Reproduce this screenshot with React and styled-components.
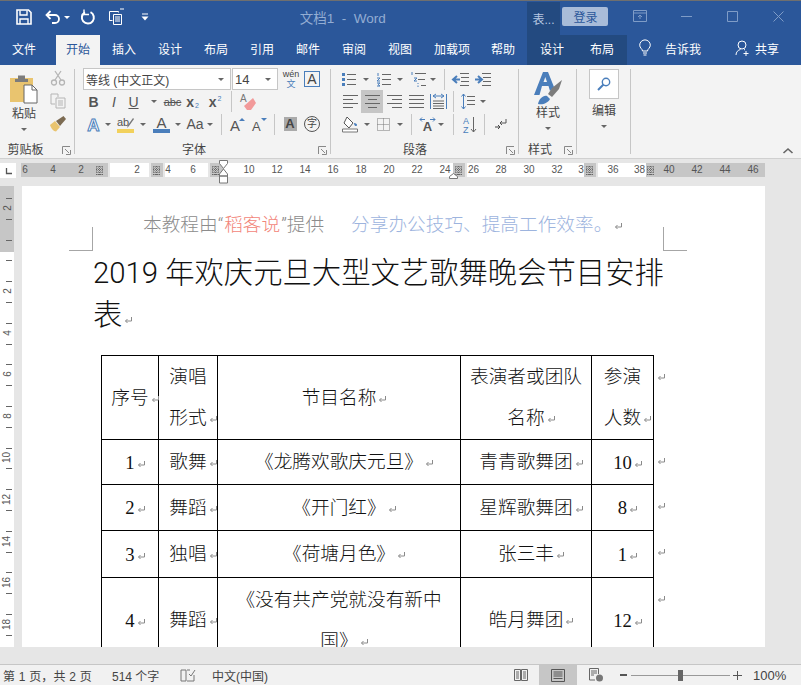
import React from 'react';
import styled, { createGlobalStyle } from 'styled-components';

const GlobalStyle = createGlobalStyle`
  html, body { margin: 0; padding: 0; background: #e6e6e6; }
  * { box-sizing: border-box; }
`;

const UI_FONT = '"Liberation Sans", "Noto Sans CJK SC", sans-serif';
const DOC_FONT = 'Roboto, "Noto Sans CJK SC", sans-serif';
const BLUE = '#2b579a';
const ICON_BLUE = '#4a7ebb';

const Window = styled.div`
  width: 801px;
  height: 685px;
  display: flex;
  flex-direction: column;
  overflow: hidden;
  font-family: ${UI_FONT};
  background: #e6e6e6;
`;

/* title bar */
const TitleBar = styled.div`
  height: 35px;
  flex: none;
  display: flex;
  align-items: stretch;
  background: ${BLUE};
  border-top: 1px solid #6f6f6f;
`;
const QuickTool = styled.span`
  width: ${p => p.$w}px;
  display: flex;
  align-items: center;
  justify-content: center;
  padding-bottom: 2px;
`;
const DocTitle = styled.div`
  flex: 0 0 ${p => p.$w}px;
  display: flex;
  align-items: center;
  justify-content: flex-end;
  padding: 0 1px 3px 0;
  color: #93add3;
  font-size: 13.5px;
  white-space: pre;
`;
const ContextTitle = styled.div`
  width: 34px;
  margin-top: 1px;
  background: #234a80;
  color: #b5c6e0;
  font-size: 12px;
  display: flex;
  align-items: center;
  justify-content: center;
`;
const LoginButton = styled.div`
  width: 46px;
  height: 19px;
  margin-top: 6px;
  border-radius: 2px;
  background: #a9bcd9;
  color: ${BLUE};
  font-size: 12px;
  display: flex;
  align-items: center;
  justify-content: center;
`;
const WinButton = styled.span`
  width: 46px;
  display: flex;
  align-items: center;
  justify-content: center;
  padding-bottom: 4px;
`;

/* tabs */
const TabBar = styled.div`
  height: 30px;
  flex: none;
  display: flex;
  align-items: stretch;
  background: ${BLUE};
  padding-left: 1px;
`;
const Tab = styled.div`
  width: ${p => p.$w}px;
  margin-left: ${p => p.$ml || 0}px;
  padding-bottom: 4px;
  display: flex;
  align-items: center;
  justify-content: center;
  gap: 3px;
  font-size: 12px;
  color: ${p => (p.$active ? BLUE : '#fff')};
  background: ${p => (p.$active ? '#f3f3f3' : p.$context ? '#234a80' : 'transparent')};
`;

/* ribbon */
const Ribbon = styled.div`
  height: 93px;
  flex: none;
  display: flex;
  background: #f3f3f3;
  position: relative;
`;
const Group = styled.div`
  width: ${p => p.$w}px;
  padding: 3px 0 0 ${p => p.$pl || 0}px;
  display: flex;
  flex-direction: column;
  position: relative;
  &::after {
    content: '';
    position: absolute;
    right: 0;
    top: 4px;
    bottom: 4px;
    width: 1px;
    background: #c6c6c6;
  }
`;
const GroupBody = styled.div`
  height: 68px;
  flex: none;
`;
const GroupLabel = styled.div`
  height: 22px;
  margin-left: ${p => p.$ml || 0}px;
  display: flex;
  align-items: center;
  justify-content: center;
  font-size: 12px;
  color: #444;
  padding-top: 2px;
`;
const Launcher = styled.span`
  position: absolute;
  right: 4px;
  bottom: 3px;
  display: flex;
`;
const ToolRow = styled.div`
  height: ${p => p.$h || 22}px;
  display: flex;
  align-items: center;
`;
const Tool = styled.span`
  flex: none;
  width: ${p => p.$w}px;
  height: 100%;
  display: flex;
  align-items: center;
  justify-content: center;
  color: #555;
  font-size: ${p => p.$size || 14}px;
  font-weight: ${p => (p.$bold ? 700 : 400)};
  font-style: ${p => (p.$italic ? 'italic' : 'normal')};
  background: ${p => (p.$active ? '#c6c6c6' : 'transparent')};
`;
const Script = styled.span`
  font-size: 7px;
  font-weight: 400;
  color: ${ICON_BLUE};
  align-self: ${p => (p.$up ? 'flex-start' : 'flex-end')};
  margin: ${p => (p.$up ? '5px 0 0 1px' : '0 0 4px 1px')};
`;
const CaretMark = styled.span`
  flex: none;
  width: 0;
  height: 0;
  border-left: 3px solid transparent;
  border-right: 3px solid transparent;
  border-top: 3px solid ${p => p.$color || '#666'};
`;
const Caret = ({ w }) => (
  <Tool $w={w}>
    <CaretMark />
  </Tool>
);
const Sep = styled.span`
  flex: none;
  width: 1px;
  height: 21px;
  background: #c6c6c6;
  margin: 0 ${p => p.$mr}px 0 ${p => p.$ml}px;
`;
const Combo = styled.div`
  flex: none;
  width: ${p => p.$w}px;
  height: 22px;
  margin-right: ${p => p.$mr || 0}px;
  background: #fff;
  border: 1px solid #c6c6c6;
  display: flex;
  align-items: center;
  justify-content: space-between;
  padding: 0 6px 0 2px;
  font-size: ${p => p.$size || 12}px;
  color: #444;
`;
const WenStack = styled.span`
  display: flex;
  flex-direction: column;
  align-items: center;
  font-size: 9px;
  line-height: 9px;
  color: #444;
`;
const WenChar = styled.span`
  font-size: 9px;
  line-height: 10px;
  color: ${ICON_BLUE};
`;
const SideRow = styled.div`
  display: flex;
  height: 100%;
`;
const PasteColumn = styled.div`
  width: 48px;
  padding-top: 5px;
  display: flex;
  flex-direction: column;
  align-items: center;
`;
const SideColumn = styled.div`
  width: 20px;
  display: flex;
  flex-direction: column;
  align-items: center;
  padding-top: 2px;
  gap: 7px;
`;
const BigColumn = styled.div`
  padding-top: 1px;
  display: flex;
  flex-direction: column;
  align-items: center;
`;
const StyleSlot = styled.span`
  display: flex;
  margin-top: 3px;
  height: 31px;
`;
const BigLabel = styled.div`
  font-size: 12px;
  line-height: 16px;
  height: 16px;
  margin: ${p => p.$mt || 0}px 0 6px;
  color: #444;
`;
const FindBox = styled.div`
  width: 30px;
  height: 30px;
  background: #fff;
  border: 1px solid #c6c6c6;
  display: flex;
  align-items: center;
  justify-content: center;
`;
const CollapseMark = styled.span`
  position: absolute;
  right: 8px;
  bottom: 4px;
  display: flex;
`;

/* horizontal ruler */
const RulerBar = styled.div`
  height: 20px;
  flex: none;
  display: flex;
  align-items: flex-end;
  background: #e6e6e6;
  border-top: 1px solid #d0d0d0;
  position: relative;
`;
const RulerCorner = styled.div`
  width: 16px;
  height: 15px;
  margin-right: 5px;
  background: #fff;
  display: flex;
  align-items: center;
  justify-content: center;
  padding-left: 2px;
`;
const RulerStrip = styled.div`
  display: flex;
  height: 14px;
  margin-bottom: 1px;
`;
const rulerTones = { dark: '#c6c6c6', light: '#fff', gap: 'transparent' };
const RulerCell = styled.span`
  flex: none;
  width: ${p => p.$w}px;
  background: ${p => rulerTones[p.$tone]};
  font-size: 10px;
  line-height: 14px;
  color: #555;
  text-align: center;
  overflow: hidden;
  display: flex;
  align-items: center;
  justify-content: center;
`;
const IndentMark = styled.svg`
  position: absolute;
  left: ${p => p.$x}px;
  top: ${p => p.$y}px;
`;

/* document */
const DocArea = styled.div`
  height: 469px;
  flex: none;
  display: flex;
  overflow: hidden;
  padding-top: 8px;
  background: #e6e6e6;
`;
const SideRuler = styled.div`
  width: 14px;
  margin-right: 8px;
  flex: none;
  padding-top: 12px;
  background: linear-gradient(#c6c6c6 0 66px, #fff 66px);
`;
const SideCell = styled.div`
  height: 20.8px;
  position: relative;
  display: flex;
  align-items: center;
  justify-content: center;
  font-size: 10px;
  color: #555;
  &::before {
    content: '';
    position: absolute;
    left: 6px;
    top: 0;
    width: 6px;
    height: 1px;
    background: #666;
  }
`;
const SideNumber = styled.span`
  display: block;
  transform: rotate(-90deg);
  padding-left: ${p => (p.$wide ? 0 : 1)}px;
`;
const Page = styled.div`
  width: 743px;
  flex: none;
  height: 700px;
  background: #fff;
  padding: 25px 0 0 71px;
  font-family: ${DOC_FONT};
  font-weight: 300;
  color: #111;
  position: relative;
`;
const CropMark = styled.span`
  position: absolute;
  top: 41px;
  width: 24px;
  height: 24px;
  border-bottom: 1px solid #a6a6a6;
  ${p => (p.$right ? 'left: 641px; border-left: 1px solid #a6a6a6;' : 'left: 47px; border-right: 1px solid #a6a6a6;')}
`;
const PageHeader = styled.div`
  height: 28px;
  margin: 0 0 13px 50px;
  font-size: 18.67px;
  line-height: 28px;
  color: #8c8c8c;
  white-space: nowrap;
`;
const Brand = styled.span`
  color: #f2857a;
  margin: 0 1px;
`;
const Slogan = styled.span`
  color: #9db4de;
  margin-left: 27px;
`;
const DocTitleText = styled.h1`
  margin: 0 0 19px;
  width: 580px;
  font-size: 29.33px;
  line-height: 42px;
  font-weight: 300;
  color: #111;
`;
const ScheduleTable = styled.table`
  border-collapse: collapse;
  table-layout: fixed;
  width: 577px;
  margin-left: 8px;
  font-size: 18.67px;
  line-height: 41px;
  font-weight: 300;
  color: #111;
`;
const Row = styled.tr`
  height: ${p => p.$h}px;
`;
const Cell = styled.td`
  border: 1px solid #000;
  padding: 1px ${p => p.$pad || 0}px 0;
  text-align: center;
  vertical-align: middle;
`;
const RowEnd = styled.td`
  border: none;
  padding: 0 0 0 1px;
  vertical-align: top;
`;
const Num = styled.span`
  font-family: "Liberation Serif", serif;
  font-weight: 400;
`;
const ReturnGlyph = styled.svg`
  margin-left: 2px;
  margin-right: ${p => (p.$hang ? -11 : 0)}px;
`;

/* status bar */
const StatusBar = styled.div`
  margin-top: 17px;
  height: 21px;
  flex: none;
  display: flex;
  align-items: center;
  background: #f1f1f1;
  border-top: 1px solid #c6c6c6;
  font-size: 12px;
  color: #444;
  padding-left: 3px;
`;
const StatusText = styled.span`
  width: ${p => p.$w}px;
  margin-left: ${p => p.$ml || 0}px;
  font-size: ${p => p.$size || 12}px;
  letter-spacing: ${p => p.$track || 0}px;
  white-space: nowrap;
`;
const StatusIcon = styled.span`
  flex: none;
  width: ${p => p.$w}px;
  height: 100%;
  display: flex;
  align-items: center;
  justify-content: center;
  background: ${p => (p.$active ? '#c6c6c6' : 'transparent')};
`;
const ZoomTrack = styled.div`
  flex: none;
  width: 99px;
  height: 1px;
  background: #999;
  display: flex;
  align-items: center;
  justify-content: center;
`;
const ZoomThumb = styled.span`
  width: 5px;
  height: 11px;
  background: #666;
`;

/* icons */
const Svg = ({ w = 16, h = 16, children, ...rest }) => (
  <svg width={w} height={h} viewBox={`0 0 ${w} ${h}`} fill="none" overflow="visible" {...rest}>
    {children}
  </svg>
);
const SaveIcon = () => (
  <Svg>
    <path d="M1 1h11.500L15 3.500V15H1z" stroke="#fff" strokeWidth="1.6" />
    <path d="M4 1.500V6h7V1.500M4 15v-5h8v5" stroke="#fff" strokeWidth="1.4" />
  </Svg>
);
const UndoIcon = () => (
  <Svg>
    <path d="M2 6h8a4 4 0 0 1 0 8H7" stroke="#fff" strokeWidth="1.8" />
    <path d="M5.500 2 1.500 6l4 4" stroke="#fff" strokeWidth="1.8" />
  </Svg>
);
const RedoIcon = () => (
  <Svg>
    <path d="M10.500 3.200a6 6 0 1 1-5.500.1" stroke="#fff" strokeWidth="2" />
    <path d="M4 .5v5h5" stroke="#fff" strokeWidth="1.4" />
  </Svg>
);
const TouchIcon = () => (
  <Svg w={18} h={18}>
    <path d="M1.500 3.500h9v1M1.500 3.500v9h3M12 1h4" stroke="#fff" strokeWidth="1" />
    <path d="M5.500 6.500h8v10h-8zM7 9h5M7 11h5M7 13h5" stroke="#fff" strokeWidth="1" />
  </Svg>
);
const CustomizeIcon = () => (
  <Svg w={8} h={8}>
    <path d="M1 1h6" stroke="#fff" />
    <path d="M.5 3.500h7L4 7.500z" fill="#fff" />
  </Svg>
);
const WinRibbonIcon = () => (
  <Svg w={14} h={12}>
    <path d="M.5.5h13v11H.5zM.5 3h13M7 9V5M5 7l2-2 2 2" stroke="#7f9cc7" />
  </Svg>
);
const WinMinIcon = () => (
  <Svg w={11} h={3}>
    <path d="M0 1.500h11" stroke="#7f9cc7" />
  </Svg>
);
const WinMaxIcon = () => (
  <Svg w={11} h={11}>
    <path d="M.5.5h10v10H.5z" stroke="#7f9cc7" />
  </Svg>
);
const WinCloseIcon = () => (
  <Svg w={11} h={11}>
    <path d="M.5.5l10 10M10.500.5l-10 10" stroke="#7f9cc7" />
  </Svg>
);
const BulbIcon = () => (
  <Svg w={12} h={17}>
    <path d="M3.500 11c0-2-2.800-3-2.800-5.800a5.300 5.300 0 0 1 10.600 0C11.300 8 8.500 9 8.500 11z" stroke="#fff" />
    <path d="M4 13h4M4.500 15h3" stroke="#fff" />
  </Svg>
);
const PersonIcon = () => (
  <Svg w={17} h={16}>
    <circle cx="7" cy="5" r="4" stroke="#fff" />
    <path d="M1 15c0-3 2-5 4.500-5.500M9 9.500l1 .4M11 11v5M8.500 13.500h5" stroke="#fff" />
  </Svg>
);
const PasteIcon = () => (
  <Svg w={30} h={31}>
    <path d="M1 5h23v24H1z" fill="#e9c46f" />
    <path d="M9 2.500h7V6h3v3H6V6h3z" fill="#7c7c7c" />
    <path d="M15 12h8l5 5v13H15z" fill="#fff" stroke="#666" />
    <path d="M23 12v5h5" stroke="#666" />
  </Svg>
);
const CutIcon = () => (
  <Svg>
    <path d="M5 1l6 9M11 1L5 10" stroke="#b5b5b5" strokeWidth="1.300" />
    <circle cx="4" cy="12.500" r="2.500" stroke="#b5b5b5" strokeWidth="1.300" />
    <circle cx="12" cy="12.500" r="2.500" stroke="#b5b5b5" strokeWidth="1.300" />
  </Svg>
);
const CopyIcon = () => (
  <Svg>
    <path d="M1 1h7v3M1 1v10h4M6 5h9v10H6zM8 8h5M8 10h5M8 12h5" stroke="#b5b5b5" />
  </Svg>
);
const PainterIcon = () => (
  <Svg>
    <path d="M0 9l5-4 5 6-4 4.500C3.500 15.500 1 12 0 9z" fill="#e9c46f" />
    <path d="M6 5l4 5 6-7-2.500-3z" fill="#7c6b52" />
  </Svg>
);
const LauncherIcon = () => (
  <Svg w={9} h={9}>
    <path d="M.5 8V.5H8M8.500 4v4.500H4M3 3l4 4" stroke="#888" />
  </Svg>
);
const EraserIcon = () => (
  <Svg w={16} h={18}>
    <path d="M7 17l-3-4 9-8 3 5-5 7z" fill="#f29a9a" />
    <text x="0" y="9" fontSize="10" fill="#777" fontFamily="Liberation Sans">A</text>
  </Svg>
);
const HighlightIcon = () => (
  <Svg w={17} h={17}>
    <text x="0" y="10" fontSize="11" fill="#555" fontFamily="Liberation Sans">ab</text>
    <path d="M10 12l1-3 5-7 1 1-5 7z" fill="#777" />
    <rect x="0" y="13" width="17" height="4" fill="#f2d15c" />
  </Svg>
);
const FontColorIcon = () => (
  <Svg w={17} h={17}>
    <text x="8.500" y="12" textAnchor="middle" fontSize="15" fill="#555" fontFamily="Liberation Sans">A</text>
    <rect x="0" y="13" width="17" height="4" fill={ICON_BLUE} />
  </Svg>
);
const OutlineA = () => (
  <Svg w={17} h={17}>
    <text x="8.500" y="15" textAnchor="middle" fontSize="17" fontWeight="700" fill="#fff" stroke={ICON_BLUE} strokeWidth="1" fontFamily="Liberation Sans">A</text>
  </Svg>
);
const GrowA = ({ down }) => (
  <Svg w={15} h={15}>
    <text x="0" y="14" fontSize={down ? 13 : 15} fill="#555" fontFamily="Liberation Sans">A</text>
    <path d={down ? 'M9 1h6l-3 3z' : 'M9 4h6l-3-3z'} fill={ICON_BLUE} />
  </Svg>
);
const ShadeA = styled.span`
  width: 13px;
  height: 14px;
  background: #aaa;
  color: #444;
  font-size: 13px;
  font-weight: 700;
  text-align: center;
  line-height: 14px;
`;
const RoundChar = styled.span`
  width: 16px;
  height: 16px;
  border: 1px solid #555;
  border-radius: 50%;
  color: #444;
  font-size: 10px;
  line-height: 14px;
  text-align: center;
`;
const BoxA = styled.span`
  width: 16px;
  height: 16px;
  border: 1px solid ${ICON_BLUE};
  color: #444;
  font-size: 14px;
  line-height: 15px;
  text-align: center;
`;
const ListIcon = ({ kind }) => (
  <Svg w={15} h={15}>
    <path d="M6 2.500h9M6 7.500h9M6 12.500h9" stroke="#666" />
    {kind === 'dots' ? (
      <path d="M1 1h3v3H1zM1 6h3v3H1zM1 11h3v3H1z" fill={ICON_BLUE} />
    ) : (
      <path d="M2 1v3M1 6h3l-3 3h3M1 11h3l-2 1.500 2 1.500H1" stroke={ICON_BLUE} />
    )}
  </Svg>
);
const MultiIcon = () => (
  <Svg w={17} h={15}>
    <path d="M5 1.500h11M8 7.500h7M11 13.500h5" stroke="#666" />
    <path d="M2 0v3M4 6h3l-3 3h3M8 11v1M8 13.500V15" stroke={ICON_BLUE} />
  </Svg>
);
const IndentIcon = ({ out }) => (
  <Svg w={17} h={13}>
    <path d="M8 .5h9M9 4.500h8M9 8.500h8M8 12.500h9" stroke="#666" />
    <path d={out ? 'M8 6.500H2M5 3 1 6.500 5 10' : 'M1 6.500h6M4 3l4 3.500L4 10'} stroke={ICON_BLUE} strokeWidth="2" />
  </Svg>
);
const alignPaths = {
  left: 'M0 1.500h15M0 5.500h10M0 9.500h15M0 13.500h10',
  center: 'M0 1.500h15M3 5.500h9M0 9.500h15M3 13.500h9',
  right: 'M0 1.500h15M5 5.500h10M0 9.500h15M5 13.500h10',
  justify: 'M0 1.500h15M0 5.500h15M0 9.500h15M0 13.500h15',
};
const AlignIcon = ({ kind }) => (
  <Svg w={15} h={15}>
    <path d={alignPaths[kind]} stroke="#666" />
  </Svg>
);
const DistributeIcon = () => (
  <Svg w={17} h={17}>
    <path d="M.5 1v15M16.500 1v15" stroke={ICON_BLUE} />
    <path d="M3 3h11M6 1 3 3l3 2M11 1l3 2-3 2" stroke={ICON_BLUE} />
    <path d="M3 8h11M3 10.500h11M3 13h11M3 15.500h11" stroke="#666" />
  </Svg>
);
const SpacingIcon = () => (
  <Svg w={14} h={17}>
    <path d="M6 3.500h8M6 7.500h8M6 11.500h8" stroke="#666" />
    <path d="M2.500 1v15M.5 3.500l2-2.500 2 2.500M.5 13.500l2 2.500 2-2.500" stroke={ICON_BLUE} />
  </Svg>
);
const ShadingIcon = () => (
  <Svg w={17} h={17}>
    <path d="M5 1l6 6-4 5-5-5z" stroke="#555" fill="#fff" />
    <path d="M12 7c2 0 3 1 3 2s-1 1-1.500 1-1.500-1-1.500-3z" fill={ICON_BLUE} />
    <path d="M.5 13h15v3H.5z" stroke="#777" fill="#fff" />
  </Svg>
);
const BordersIcon = () => (
  <Svg w={13} h={13}>
    <path d="M.5.5h12v12H.5zM.5 6.500h12M6.500.5v12" stroke="#777" strokeDasharray="1 1" />
  </Svg>
);
const AsianIcon = () => (
  <Svg w={17} h={15}>
    <text x="8.500" y="14" textAnchor="middle" fontSize="13" fontWeight="700" fill="#555" fontFamily="Liberation Sans">A</text>
    <path d="M1 2.500h5M3 .5l-2 2 2 2M16 2.500h-5M14 .5l2 2-2 2" stroke={ICON_BLUE} />
  </Svg>
);
const SortIcon = () => (
  <Svg w={14} h={17}>
    <text x="0" y="8" fontSize="9" fill={ICON_BLUE} fontFamily="Liberation Sans">A</text>
    <text x="0" y="17" fontSize="9" fill={ICON_BLUE} fontFamily="Liberation Sans">Z</text>
    <path d="M10.500 1v15M8 13l2.500 3 2.500-3" stroke="#666" />
  </Svg>
);
const MarksIcon = () => (
  <Svg w={13} h={13}>
    <path d="M12 1v4H6M8 3 6 5l2 2" stroke="#555" />
    <path d="M1 9h5M4 7l2 2-2 2" stroke="#444" />
  </Svg>
);
const StyleIcon = () => (
  <Svg w={28} h={32}>
    <path
      fillRule="evenodd"
      d="M0 23 9 0h5l6 15-4 4-1.500-5H8l-2.500 9zM9.500 10h3.500l-1.700-5z"
      fill={ICON_BLUE}
    />
    <path d="M4 32c1-5 5-9 9-8l3 3c-2 4-7 6-12 5z" fill={ICON_BLUE} />
    <path d="M14 22l4-6 10-8-3 9-7 8z" fill="#7c7c7c" />
  </Svg>
);
const SearchIcon = () => (
  <Svg w={14} h={14}>
    <circle cx="9" cy="5" r="3.700" stroke={ICON_BLUE} strokeWidth="1.400" />
    <path d="M6.500 7.500 1 13" stroke={ICON_BLUE} strokeWidth="2" />
  </Svg>
);
const CollapseIcon = () => (
  <Svg w={10} h={6}>
    <path d="M.5 5 5 1l4.500 4" stroke="#666" strokeWidth="1.600" />
  </Svg>
);
const TabStopIcon = () => (
  <Svg w={6} h={6}>
    <path d="M.5 0v5.500H6" stroke="#555" strokeWidth="1.300" />
  </Svg>
);
const RulerGrid = () => (
  <Svg w={8} h={9}>
    <path d="M0 1h8M0 3.500h8M0 6h8M0 8.500h8M1 0v9M3.500 0v9M6 0v9" stroke="#666" strokeDasharray="1 1" strokeWidth="1" />
  </Svg>
);
const ReturnMark = ({ hang }) => (
  <ReturnGlyph $hang={hang} width="9" height="9" viewBox="0 0 9 9" fill="none">
    <path d="M7.500 1v4H1.500M3.500 3 1.500 5l2 2" stroke="#8a8a8a" />
  </ReturnGlyph>
);
const ProofIcon = () => (
  <Svg w={16} h={13}>
    <path d="M1 1h5v11H1zM7 1h3M7 12h7V6" stroke="#777" />
    <path d="M9 5l2 2 4-6" stroke="#777" />
  </Svg>
);
const ReadIcon = () => (
  <Svg w={14} h={13}>
    <path d="M.5.5h6v11h-6zM7.500.5h6v11h-6zM2 3h3M2 5h3M2 7h3M2 9h3M9 3h3M9 5h3M9 7h3M9 9h3" stroke="#666" />
  </Svg>
);
const PrintIcon = () => (
  <Svg w={14} h={13}>
    <path d="M.5.5h13v12H.5zM2.500 3h9M2.500 5h9M2.500 7h9M2.500 9.500h9" stroke="#555" />
  </Svg>
);
const WebIcon = () => (
  <Svg w={15} h={14}>
    <path d="M6 12H.5V.5h9V6M2 3h6M2 5h6M2 7h3" stroke="#666" />
    <circle cx="10.500" cy="10" r="3.500" fill="#777" />
  </Svg>
);

/* ruler cells: labels stay on the scale, spacers fill what is between */
const run = (from, to, tone, marks = []) => {
  const cells = [];
  let pos = from;
  marks.forEach(([center, text]) => {
    const w = text === '#' ? 10 : text.length * 6 + 2;
    const left = Math.max(center - w / 2, pos);
    if (left > pos) cells.push({ w: left - pos, tone });
    const right = Math.min(center + w / 2, to);
    cells.push({ w: right - left, tone, text });
    pos = right;
  });
  if (to > pos) cells.push({ w: to - pos, tone });
  return cells;
};
const RULER = [
  ...run(21, 108, 'dark', [[25, '6'], [53, '4'], [81, '2'], [100, '#']]),
  ...run(108, 110, 'gap'),
  ...run(110, 149, 'light', [[137, '2']]),
  ...run(149, 151, 'gap'),
  ...run(151, 163, 'dark', [[157, '#']]),
  ...run(163, 165, 'gap'),
  ...run(165, 208, 'light', [[167, '4'], [193, '6']]),
  ...run(208, 210, 'gap'),
  ...run(210, 224, 'dark', [[216, '#']]),
  ...run(224, 453, 'light', [[249, '10'], [277, '12'], [305, '14'], [333, '16'], [361, '18'], [389, '20'], [417, '22'], [445, '24']]),
  ...run(453, 465, 'dark', [[459, '#']]),
  ...run(465, 467, 'gap'),
  ...run(467, 584, 'light', [[473, '26'], [501, '28'], [529, '30'], [557, '32'], [582, '3']]),
  ...run(584, 596, 'dark', [[590, '#']]),
  ...run(596, 598, 'gap'),
  ...run(598, 646, 'light', [[613, '36'], [640, '38']]),
  ...run(646, 765, 'dark', [[651, '#'], [669, '40'], [697, '42'], [725, '44'], [753, '46']]),
];
const SIDE_RULER = ['2', '', '', '', '2', '', '4', '', '6', '', '8', '', '10', '', '12', '', '14', '', '16', '', '18', ''];

const rows = [
  { h: 45, no: '1', style: '歌舞', name: '《龙腾欢歌庆元旦》', group: '青青歌舞团', count: '10' },
  { h: 46, no: '2', style: '舞蹈', name: '《开门红》', group: '星辉歌舞团', count: '8' },
  { h: 47, no: '3', style: '独唱', name: '《荷塘月色》', group: '张三丰', count: '1' },
  { h: 85, no: '4', style: '舞蹈', name: '《没有共产党就没有新中国》', group: '皓月舞团', count: '12' },
];

function App() {
  return (
    <Window>
      <GlobalStyle />
      <TitleBar>
        <QuickTool $w={16} />
        <QuickTool $w={16}><SaveIcon /></QuickTool>
        <QuickTool $w={13} />
        <QuickTool $w={16}><UndoIcon /></QuickTool>
        <QuickTool $w={12}><CaretMark $color="#fff" /></QuickTool>
        <QuickTool $w={7} />
        <QuickTool $w={16}><RedoIcon /></QuickTool>
        <QuickTool $w={12} />
        <QuickTool $w={18}><TouchIcon /></QuickTool>
        <QuickTool $w={15} />
        <QuickTool $w={8}><CustomizeIcon /></QuickTool>
        <DocTitle $w={238}>文档1  -  Word</DocTitle>
        <QuickTool $w={140} />
        <ContextTitle>表...</ContextTitle>
        <QuickTool $w={2} />
        <LoginButton>登录</LoginButton>
        <QuickTool $w={9} />
        <WinButton><WinRibbonIcon /></WinButton>
        <WinButton><WinMinIcon /></WinButton>
        <WinButton><WinMaxIcon /></WinButton>
        <WinButton><WinCloseIcon /></WinButton>
      </TitleBar>

      <TabBar>
        <Tab $w={46}>文件</Tab>
        <Tab $w={44} $ml={9} $active>开始</Tab>
        <Tab $w={46} $ml={1}>插入</Tab>
        <Tab $w={46}>设计</Tab>
        <Tab $w={46}>布局</Tab>
        <Tab $w={46}>引用</Tab>
        <Tab $w={46}>邮件</Tab>
        <Tab $w={46}>审阅</Tab>
        <Tab $w={46}>视图</Tab>
        <Tab $w={58}>加载项</Tab>
        <Tab $w={44}>帮助</Tab>
        <Tab $w={50} $ml={2} $context>设计</Tab>
        <Tab $w={50} $context>布局</Tab>
        <Tab $w={36}><BulbIcon /></Tab>
        <Tab $w={40}>告诉我</Tab>
        <Tab $w={31} />
        <Tab $w={46}><PersonIcon />共享</Tab>
      </TabBar>

      <Ribbon>
        <Group $w={75}>
          <GroupBody>
            <SideRow>
              <PasteColumn>
                <PasteIcon />
                <BigLabel $mt={2}>粘贴</BigLabel>
                <CaretMark />
              </PasteColumn>
              <SideColumn>
                <CutIcon />
                <CopyIcon />
                <PainterIcon />
              </SideColumn>
            </SideRow>
          </GroupBody>
          <GroupLabel $ml={-24}>剪贴板</GroupLabel>
          <Launcher><LauncherIcon /></Launcher>
        </Group>

        <Group $w={256} $pl={8}>
          <GroupBody>
            <ToolRow>
              <Combo $w={148} $mr={1}>等线 (中文正文)<CaretMark /></Combo>
              <Combo $w={46} $size={13}>14<CaretMark /></Combo>
              <Tool $w={26}>
                <WenStack>wén<WenChar>文</WenChar></WenStack>
              </Tool>
              <BoxA>A</BoxA>
            </ToolRow>
            <ToolRow $h={23}>
              <Tool $w={21} $bold>B</Tool>
              <Tool $w={20} $italic>I</Tool>
              <Tool $w={19}><u>U</u></Tool>
              <Caret w={21} />
              <Tool $w={17} $size={11}><s>abc</s></Tool>
              <Tool $w={23} $bold>x<Script>2</Script></Tool>
              <Tool $w={22} $bold>x<Script $up>2</Script></Tool>
              <Sep $ml={5} $mr={4} />
              <Tool $w={24}><EraserIcon /></Tool>
            </ToolRow>
            <ToolRow>
              <Tool $w={20}><OutlineA /></Tool>
              <Caret w={10} />
              <Tool $w={24}><HighlightIcon /></Tool>
              <Caret w={12} />
              <Tool $w={24}><FontColorIcon /></Tool>
              <Caret w={10} />
              <Tool $w={24}>Aa</Tool>
              <Caret w={6} />
              <Sep $ml={8} $mr={4} />
              <Tool $w={22}><GrowA /></Tool>
              <Tool $w={22}><GrowA down /></Tool>
              <Sep $ml={4} $mr={4} />
              <Tool $w={22}><ShadeA>A</ShadeA></Tool>
              <Tool $w={22}><RoundChar>字</RoundChar></Tool>
            </ToolRow>
          </GroupBody>
          <GroupLabel $ml={-26}>字体</GroupLabel>
          <Launcher><LauncherIcon /></Launcher>
        </Group>

        <Group $w={188} $pl={8}>
          <GroupBody>
            <ToolRow>
              <Tool $w={18}><ListIcon kind="dots" /></Tool>
              <Caret w={18} />
              <Tool $w={16}><ListIcon kind="nums" /></Tool>
              <Caret w={18} />
              <Tool $w={18}><MultiIcon /></Tool>
              <Caret w={12} />
              <Sep $ml={5} $mr={5} />
              <Tool $w={20}><IndentIcon out /></Tool>
              <Tool $w={24}><IndentIcon /></Tool>
            </ToolRow>
            <ToolRow $h={23}>
              <Tool $w={22}><AlignIcon kind="left" /></Tool>
              <Tool $w={22} $active><AlignIcon kind="center" /></Tool>
              <Tool $w={22}><AlignIcon kind="right" /></Tool>
              <Tool $w={22}><AlignIcon kind="justify" /></Tool>
              <Tool $w={22}><DistributeIcon /></Tool>
              <Sep $ml={4} $mr={4} />
              <Tool $w={20}><SpacingIcon /></Tool>
              <Caret w={10} />
            </ToolRow>
            <ToolRow>
              <Tool $w={22}><ShadingIcon /></Tool>
              <Caret w={12} />
              <Tool $w={20}><BordersIcon /></Tool>
              <Caret w={14} />
              <Sep $ml={4} $mr={5} />
              <Tool $w={21}><AsianIcon /></Tool>
              <Caret w={6} />
              <Sep $ml={9} $mr={5} />
              <Tool $w={22}><SortIcon /></Tool>
              <Sep $ml={3} $mr={5} />
              <Tool $w={20}><MarksIcon /></Tool>
            </ToolRow>
          </GroupBody>
          <GroupLabel $ml={-28}>段落</GroupLabel>
          <Launcher><LauncherIcon /></Launcher>
        </Group>

        <Group $w={58}>
          <GroupBody>
            <BigColumn>
              <StyleSlot><StyleIcon /></StyleSlot>
              <BigLabel $mt={2}>样式</BigLabel>
              <CaretMark />
            </BigColumn>
          </GroupBody>
          <GroupLabel $ml={-16}>样式</GroupLabel>
          <Launcher><LauncherIcon /></Launcher>
        </Group>

        <Group $w={54}>
          <GroupBody>
            <BigColumn>
              <FindBox><SearchIcon /></FindBox>
              <BigLabel $mt={4}>编辑</BigLabel>
              <CaretMark />
            </BigColumn>
          </GroupBody>
        </Group>
        <CollapseMark><CollapseIcon /></CollapseMark>
      </Ribbon>

      <RulerBar>
        <RulerCorner><TabStopIcon /></RulerCorner>
        <RulerStrip>
          {RULER.map((cell, i) => (
            <RulerCell key={i} $w={cell.w} $tone={cell.tone}>
              {cell.text === '#' ? <RulerGrid /> : cell.text}
            </RulerCell>
          ))}
        </RulerStrip>
        <IndentMark $x={219} $y={1} width="10" height="26" viewBox="0 0 10 26" fill="#fff">
          <path d="M.5.5h8v3l-4 5-4-5zM4.500 9l4 5v2h-8v-2zM.5 16h8v7h-8z" stroke="#777" />
        </IndentMark>
        <IndentMark $x={449} $y={14} width="9" height="6" viewBox="0 0 9 6" fill="#fff">
          <path d="M.5 5.500v-2l4-3 4 3v2z" stroke="#777" />
        </IndentMark>
      </RulerBar>

      <DocArea>
        <SideRuler>
          {SIDE_RULER.map((label, i) => (
            <SideCell key={i}>
              {label && <SideNumber $wide={label.length > 1}>{label}</SideNumber>}
            </SideCell>
          ))}
        </SideRuler>
        <Page>
          <CropMark />
          <CropMark $right />
          <PageHeader>
            本教程由“<Brand>稻客说</Brand>”提供
            <Slogan>分享办公技巧、提高工作效率。</Slogan>
            <ReturnMark />
          </PageHeader>
          <DocTitleText>
            2019 年欢庆元旦大型文艺歌舞晚会节目安排表<ReturnMark />
          </DocTitleText>
          <ScheduleTable>
            <colgroup>
              <col style={{ width: 57 }} />
              <col style={{ width: 59 }} />
              <col style={{ width: 243 }} />
              <col style={{ width: 131 }} />
              <col style={{ width: 62 }} />
              <col />
            </colgroup>
            <tbody>
              <Row $h={84}>
                <Cell>序号<ReturnMark hang /></Cell>
                <Cell>演唱<br />形式<ReturnMark hang /></Cell>
                <Cell>节目名称<ReturnMark hang /></Cell>
                <Cell>表演者或团队<br />名称<ReturnMark hang /></Cell>
                <Cell>参演<br />人数<ReturnMark hang /></Cell>
                <RowEnd><ReturnMark /></RowEnd>
              </Row>
              {rows.map(row => (
                <Row key={row.no} $h={row.h}>
                  <Cell><Num>{row.no}</Num><ReturnMark hang /></Cell>
                  <Cell>{row.style}<ReturnMark hang /></Cell>
                  <Cell $pad={10}>{row.name}<ReturnMark hang /></Cell>
                  <Cell>{row.group}<ReturnMark hang /></Cell>
                  <Cell><Num>{row.count}</Num><ReturnMark hang /></Cell>
                  <RowEnd><ReturnMark /></RowEnd>
                </Row>
              ))}
            </tbody>
          </ScheduleTable>
        </Page>
      </DocArea>

      <StatusBar>
        <StatusText $w={109} $track={0.2}>第 1 页，共 2 页</StatusText>
        <StatusText $w={59}>514 个字</StatusText>
        <StatusIcon $w={33}><ProofIcon /></StatusIcon>
        <StatusText $w={291} $ml={8}>中文(中国)</StatusText>
        <StatusIcon $w={36}><ReadIcon /></StatusIcon>
        <StatusIcon $w={38} $active><PrintIcon /></StatusIcon>
        <StatusIcon $w={38}><WebIcon /></StatusIcon>
        <StatusIcon $w={16}>
          <svg width="7" height="3"><rect width="7" height="2" fill="#555" /></svg>
        </StatusIcon>
        <ZoomTrack><ZoomThumb /></ZoomTrack>
        <StatusIcon $w={14}>
          <svg width="9" height="9"><path d="M4.500 0v9M0 4.500h9" stroke="#555" /></svg>
        </StatusIcon>
        <StatusText $w={46} $ml={9} $size={13}>100%</StatusText>
      </StatusBar>
    </Window>
  );
}

export default App;
